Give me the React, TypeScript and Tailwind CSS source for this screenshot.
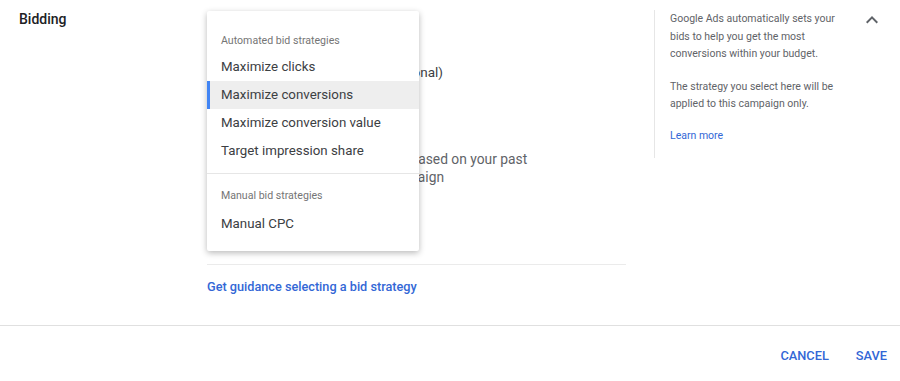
const automated = [
  "Maximize clicks",
  "Maximize conversions",
  "Maximize conversion value",
  "Target impression share",
];

export default function App() {
  const selected = "Maximize conversions";

  return (
    <div className="w-[900px] h-[381px] bg-white overflow-hidden font-['Roboto',sans-serif] text-[#202124]">
      {/* Section body */}
      <div className="flex h-[326px] border-b border-[#e0e0e0]">
        <div className="w-[207px] pl-[19px] pt-[10px]">
          <h2 className="text-[14px] leading-[18px] font-medium text-[#202124]">Bidding</h2>
        </div>

        {/* Form column, menu sits over it */}
        <div className="relative w-[419px]">
          <div className="h-[265px] border-b border-[#ebebeb]">
            <div className="pt-[62px] w-[236px] text-right whitespace-nowrap text-[13.5px] leading-[20px] text-[#3c4043]">
              Set a target cost per action (optional)
            </div>
            <div className="pt-[68px] text-[13.8px] leading-[18px] text-[#5f6368] whitespace-nowrap">
              <div className="w-[310px] text-right">Bids are optimized automatically based on your past</div>
              <div className="w-[237px] text-right">performance data in this campaign</div>
            </div>
          </div>
          <a className="block pt-[13px] text-[12.7px] leading-[18px] font-medium text-[#3367d6]">
            Get guidance selecting a bid strategy
          </a>

          {/* Dropdown menu */}
          <div className="absolute left-0 top-[11px] w-[212px] bg-white rounded-[2px] shadow-[0_2px_6px_rgba(0,0,0,0.28)] pt-[22px] pb-[13px]">
            <div className="px-[14px] h-[16px] mb-[4px] text-[10.6px] leading-[16px] text-[#757575]">
              Automated bid strategies
            </div>
            {automated.map((item) => (
              <div
                key={item}
                className={`h-[28px] flex items-center text-[13.3px] text-[#3c4043] ${
                  item === selected ? "bg-[#eeeeee] border-l-[3px] border-[#4285f4] pl-[11px]" : "pl-[14px]"
                }`}
              >
                {item}
              </div>
            ))}
            <div className="mt-[8px] border-t border-[#e6e6e6]" />
            <div className="px-[14px] pt-[14px] h-[30px] mb-[6px] text-[10.6px] leading-[16px] text-[#757575]">
              Manual bid strategies
            </div>
            <div className="h-[28px] flex items-center pl-[14px] text-[13.3px] text-[#3c4043]">Manual CPC</div>
          </div>
        </div>

        {/* Help panel */}
        <div className="pl-[28px] pt-[10px]">
          <div className="w-[186px] h-[148px] border-l border-[#e6e6e6] pl-[15px] text-[10.5px] leading-[17.5px] text-[#5f6368]">
            <p className="w-[172px]">Google Ads automatically sets your bids to help you get the most conversions within your budget.</p>
            <p className="w-[172px] mt-[15px]">The strategy you select here will be applied to this campaign only.</p>
            <a className="block mt-[14px] text-[#3367d6]">Learn more</a>
          </div>
        </div>
        <div className="pl-[20px] pt-[8px]">
          <svg viewBox="0 0 24 24" className="w-[24px] h-[24px] fill-[#5f6368]">
            <path d="M7.41 15.41 12 10.83l4.59 4.58L18 14l-6-6-6 6z" />
          </svg>
        </div>
      </div>

      {/* Footer actions */}
      <div className="flex justify-end items-center gap-[27px] pr-[13px] pt-[21px]">
        <button className="text-[12.8px] leading-[18px] font-medium text-[#3367d6]">CANCEL</button>
        <button className="text-[12.8px] leading-[18px] font-medium text-[#3367d6]">SAVE</button>
      </div>
    </div>
  );
}
